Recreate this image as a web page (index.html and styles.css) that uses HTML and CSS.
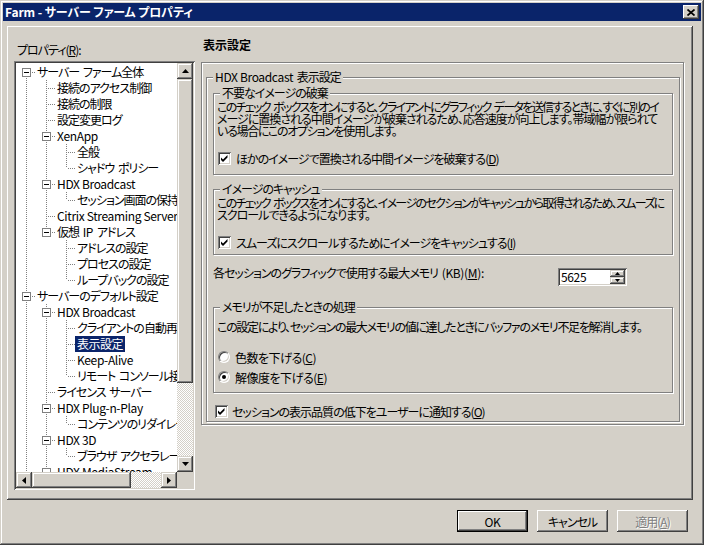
FILE: index.html
```html
<!DOCTYPE html>
<html lang="ja">
<head>
  <meta charset="UTF-8">
  <title>Farm - サーバー ファーム プロパティ</title>
  <link rel="stylesheet" href="styles.css">
</head>
<body>
<div class="window">
  <div class="titlebar">
    <span class="title">Farm - サーバー ファーム プロパティ</span>
    <span class="close-btn"><svg width="8" height="7" viewBox="0 0 8 7"><path d="M0.5 0.5l7 6M7.5 0.5l-7 6" stroke="#000" stroke-width="1.7"/></svg></span>
  </div>

  <div class="panel">
    <div class="left-col">
      <div class="label">プロパティ(<u>R</u>):</div>
      <div class="tree-box">
        <div class="tree-rows">
          <div class="row"><span class="g r"><span class="exp"></span></span><span class="txt">サーバー ファーム全体</span></div>
          <div class="row"><span class="g v"></span><span class="g t"></span><span class="txt">接続のアクセス制御</span></div>
          <div class="row"><span class="g v"></span><span class="g t"></span><span class="txt">接続の制限</span></div>
          <div class="row"><span class="g v"></span><span class="g t"></span><span class="txt">設定変更ログ</span></div>
          <div class="row"><span class="g v"></span><span class="g t"><span class="exp"></span></span><span class="txt en">XenApp</span></div>
          <div class="row"><span class="g v"></span><span class="g v"></span><span class="g t"></span><span class="txt">全般</span></div>
          <div class="row"><span class="g v"></span><span class="g v"></span><span class="g l"></span><span class="txt">シャドウ ポリシー</span></div>
          <div class="row"><span class="g v"></span><span class="g t"><span class="exp"></span></span><span class="txt en">HDX Broadcast</span></div>
          <div class="row"><span class="g v"></span><span class="g v"></span><span class="g l"></span><span class="txt">セッション画面の保持</span></div>
          <div class="row"><span class="g v"></span><span class="g t"></span><span class="txt en">Citrix Streaming Server</span></div>
          <div class="row"><span class="g v"></span><span class="g l"><span class="exp"></span></span><span class="txt">仮想 <span class="en">IP</span> アドレス</span></div>
          <div class="row"><span class="g v"></span><span class="g e"></span><span class="g t"></span><span class="txt">アドレスの設定</span></div>
          <div class="row"><span class="g v"></span><span class="g e"></span><span class="g t"></span><span class="txt">プロセスの設定</span></div>
          <div class="row"><span class="g v"></span><span class="g e"></span><span class="g l"></span><span class="txt">ループバックの設定</span></div>
          <div class="row"><span class="g t"><span class="exp"></span></span><span class="txt">サーバーのデフォルト設定</span></div>
          <div class="row"><span class="g v"></span><span class="g t"><span class="exp"></span></span><span class="txt en">HDX Broadcast</span></div>
          <div class="row"><span class="g v"></span><span class="g v"></span><span class="g t"></span><span class="txt">クライアントの自動再接続</span></div>
          <div class="row"><span class="g v"></span><span class="g v"></span><span class="g t"></span><span class="txt sel">表示設定</span></div>
          <div class="row"><span class="g v"></span><span class="g v"></span><span class="g t"></span><span class="txt en">Keep-Alive</span></div>
          <div class="row"><span class="g v"></span><span class="g v"></span><span class="g l"></span><span class="txt">リモート コンソール接続</span></div>
          <div class="row"><span class="g v"></span><span class="g t"></span><span class="txt">ライセンス サーバー</span></div>
          <div class="row"><span class="g v"></span><span class="g t"><span class="exp"></span></span><span class="txt en">HDX Plug-n-Play</span></div>
          <div class="row"><span class="g v"></span><span class="g v"></span><span class="g l"></span><span class="txt">コンテンツのリダイレクト</span></div>
          <div class="row"><span class="g v"></span><span class="g t"><span class="exp"></span></span><span class="txt en">HDX 3D</span></div>
          <div class="row"><span class="g v"></span><span class="g v"></span><span class="g l"></span><span class="txt">ブラウザ アクセラレーション</span></div>
          <div class="row"><span class="g v"></span><span class="g t"><span class="exp"></span></span><span class="txt en">HDX MediaStream</span></div>
        </div>
        <div class="vscroll">
          <span class="sb-btn"><svg width="7" height="4" viewBox="0 0 7 4"><polygon points="3.5,0 7,4 0,4" fill="#000"/></svg></span>
          <span class="thumb vthumb"></span>
          <span class="track"></span>
          <span class="sb-btn"><svg width="7" height="4" viewBox="0 0 7 4"><polygon points="0,0 7,0 3.5,4" fill="#000"/></svg></span>
        </div>
        <div class="hscroll">
          <span class="sb-btn"><svg width="4" height="7" viewBox="0 0 4 7"><polygon points="4,0 4,7 0,3.5" fill="#000"/></svg></span>
          <span class="thumb hthumb"></span>
          <span class="track"></span>
          <span class="sb-btn"><svg width="4" height="7" viewBox="0 0 4 7"><polygon points="0,0 4,3.5 0,7" fill="#000"/></svg></span>
        </div>
        <div class="corner"></div>
      </div>
    </div>

    <div class="right-col">
      <div class="heading">表示設定</div>
      <div class="frame">
        <fieldset class="group outer">
          <legend><span class="en">HDX Broadcast</span> 表示設定</legend>

          <fieldset class="group inner g1">
            <legend>不要なイメージの破棄</legend>
            <div class="desc">
              <span class="ln k1">このチェック ボックスをオンにすると、クライアントにグラフィック データを送信するときに、すぐに別のイ</span>
              <span class="ln k3">メージに置換される中間イメージが破棄されるため、応答速度が向上します。帯域幅が限られて</span>
              <span class="ln k2">いる場合にこのオプションを使用します。</span>
            </div>
            <div class="check-row"><span class="chk"><svg width="7" height="7" viewBox="0 0 7 7"><polygon points="0,2.5 2,4.5 6.5,0 6.5,2.5 2,7 0,5" fill="#000"/></svg></span><span>ほかのイメージで置換される中間イメージを破棄する(<u>D</u>)</span></div>
          </fieldset>

          <fieldset class="group inner g2">
            <legend>イメージのキャッシュ</legend>
            <div class="desc">
              <span class="ln k1">このチェック ボックスをオンにすると、イメージのセクションがキャッシュから取得されるため、スムーズに</span>
              <span class="ln k3">スクロールできるようになります。</span>
            </div>
            <div class="check-row"><span class="chk"><svg width="7" height="7" viewBox="0 0 7 7"><polygon points="0,2.5 2,4.5 6.5,0 6.5,2.5 2,7 0,5" fill="#000"/></svg></span><span>スムーズにスクロールするためにイメージをキャッシュする(<u>I</u>)</span></div>
          </fieldset>

          <div class="mem-row">
            <span class="mem-label">各セッションのグラフィックで使用する最大メモリ <span class="en">(KB)(<u>M</u>):</span></span>
            <span class="spin">
              <span class="spin-val en">5625</span>
              <span class="spin-btns">
                <span class="spin-btn"><svg width="5" height="3" viewBox="0 0 5 3"><polygon points="2.5,0 5,3 0,3" fill="#000"/></svg></span>
                <span class="spin-btn"><svg width="5" height="3" viewBox="0 0 5 3"><polygon points="0,0 5,0 2.5,3" fill="#000"/></svg></span>
              </span>
            </span>
          </div>

          <fieldset class="group inner g3">
            <legend>メモリが不足したときの処理</legend>
            <div class="desc">
              <span class="ln k2">この設定により、セッションの最大メモリの値に達したときにバッファのメモリ不足を解消します。</span>
            </div>
            <div class="radio-row first"><span class="radio"></span><span>色数を下げる(<u>C</u>)</span></div>
            <div class="radio-row"><span class="radio on"></span><span>解像度を下げる(<u>E</u>)</span></div>
          </fieldset>

          <div class="check-row last"><span class="chk"><svg width="7" height="7" viewBox="0 0 7 7"><polygon points="0,2.5 2,4.5 6.5,0 6.5,2.5 2,7 0,5" fill="#000"/></svg></span><span>セッションの表示品質の低下をユーザーに通知する(<u>O</u>)</span></div>
        </fieldset>
      </div>
    </div>
  </div>

  <div class="buttons">
    <span class="btn default en">OK</span>
    <span class="btn">キャンセル</span>
    <span class="btn disabled">適用(<u>A</u>)</span>
  </div>
</div>
</body>
</html>
```

FILE: styles.css
```css
* {
  box-sizing: border-box;
}
body {
  margin: 0;
  background: #d4d0c8;
  font-family: "Noto Sans CJK JP", sans-serif;
  font-size: 12px;
  color: #000;
  letter-spacing: -1px;
  word-spacing: 2px;
  font-feature-settings: "palt";
}
u {
  text-underline-offset: 1px;
}
.en {
  letter-spacing: -0.35px;
  word-spacing: 0;
}

/* window frame */
.window {
  width: 704px;
  height: 545px;
  padding: 3px;
  display: flex;
  flex-direction: column;
  background: #d4d0c8;
  box-shadow: inset -1px -1px #404040, inset 1px 1px #d4d0c8, inset -2px -2px #808080, inset 2px 2px #fff;
}
.titlebar {
  height: 18px;
  flex: none;
  display: flex;
  align-items: center;
  justify-content: space-between;
  padding: 0 2px 0 2px;
  background: #0a246a;
}
.title {
  color: #fff;
  font-weight: 700;
  line-height: 18px;
  letter-spacing: -0.1px;
  word-spacing: 0;
}
.close-btn {
  width: 16px;
  height: 14px;
  display: flex;
  align-items: center;
  justify-content: center;
  background: #d4d0c8;
  box-shadow: inset -1px -1px #404040, inset 1px 1px #fff, inset -2px -2px #808080;
}

/* main panel */
.panel {
  height: 474px;
  flex: none;
  margin: 5px 8px 0 4px;
  padding: 11px 9px 0 7px;
  display: flex;
  gap: 6px;
  box-shadow: inset -1px -1px #404040, inset 1px 1px #fff, inset -2px -2px #808080;
}
.left-col {
  width: 181px;
  flex: none;
}
.label {
  margin-top: 5px;
  height: 16px;
  line-height: 16px;
  padding-left: 3px;
}

/* tree */
.tree-box {
  margin-top: 3px;
  width: 181px;
  height: 429px;
  padding: 2px;
  background: #fff;
  display: grid;
  grid-template-columns: 161px 16px;
  grid-template-rows: 409px 16px;
  box-shadow: inset 1px 1px #808080, inset -1px -1px #fff, inset 2px 2px #404040, inset -2px -2px #d4d0c8;
}
.tree-rows {
  overflow: hidden;
  padding-top: 1px;
  background: #fff;
}
.row {
  display: flex;
  height: 16px;
  line-height: 16px;
  white-space: nowrap;
}
.g {
  position: relative;
  width: 20px;
  height: 16px;
  flex: none;
}
.g::before {
  content: "";
  position: absolute;
  left: 10px;
  top: 0;
  bottom: 0;
  width: 1px;
  background: repeating-linear-gradient(to bottom, #808080 0 1px, transparent 1px 2px);
}
.g::after {
  content: "";
  position: absolute;
  left: 11px;
  top: 8px;
  width: 8px;
  height: 1px;
  background: repeating-linear-gradient(to right, transparent 0 1px, #808080 1px 2px);
}
.g.v::after,
.g.e::before,
.g.e::after {
  display: none;
}
.g.l::before {
  bottom: 8px;
}
.g.r::before {
  top: 8px;
}
.exp {
  position: absolute;
  left: 6px;
  top: 4px;
  width: 9px;
  height: 9px;
  z-index: 1;
  border: 1px solid #808080;
  background: #fff;
}
.exp::after {
  content: "";
  position: absolute;
  left: 1px;
  top: 3px;
  width: 5px;
  height: 1px;
  background: #000;
}
.txt {
  padding: 0 2px 0 1px;
}
.txt.sel {
  background: #0a246a;
  color: #fff;
  margin-left: -1px;
  padding: 0 2px 0 2px;
  letter-spacing: -0.5px;
}

/* scrollbars */
.vscroll {
  display: flex;
  flex-direction: column;
}
.hscroll {
  display: flex;
}
.sb-btn,
.thumb {
  flex: none;
  display: flex;
  align-items: center;
  justify-content: center;
  background: #d4d0c8;
  box-shadow: inset -1px -1px #404040, inset 1px 1px #d4d0c8, inset -2px -2px #808080, inset 2px 2px #fff;
}
.sb-btn {
  width: 16px;
  height: 16px;
}
.vthumb {
  height: 304px;
}
.hthumb {
  width: 99px;
}
.track {
  flex: 1;
  background: repeating-conic-gradient(#fff 0 25%, #d4d0c8 0 50%) 0 0 / 2px 2px;
}
.corner {
  background: #d4d0c8;
}

/* right side */
.right-col {
  width: 483px;
  flex: none;
}
.heading {
  height: 16px;
  line-height: 16px;
  padding-left: 2px;
  font-weight: 700;
  letter-spacing: 0;
}
.frame {
  margin-top: 9px;
  height: 363px;
  padding: 7px 3px 0 4px;
  border: 1px solid #808080;
  box-shadow: inset 1px 1px #fff, 1px 1px #fff;
}
.group {
  margin: 0;
  min-width: 0;
  border: 1px solid #808080;
  box-shadow: inset 1px 1px #fff, 1px 1px #fff;
}
.group legend {
  padding: 0 2px;
  line-height: 14px;
  background: #d4d0c8;
}
.group.outer {
  padding: 0 6px 2px 6px;
}
.group.inner {
  padding: 0 3px;
}
.group.inner legend {
  margin-left: 3px;
}
.g1 {
  margin-top: 2px;
  padding-bottom: 8px !important;
}
.g2 {
  margin-top: 7px;
  padding-bottom: 4px !important;
}
.g3 {
  margin-top: 14px;
  padding-bottom: 7px !important;
}
.desc {
  margin-top: 1px;
  line-height: 12px;
  white-space: nowrap;
}
.g3 .desc {
  margin-top: 7px;
}
.ln {
  display: block;
}
.ln.k1 {
  letter-spacing: -1.65px;
}
.ln.k2 {
  letter-spacing: -1.3px;
}
.ln.k3 {
  letter-spacing: -1px;
}
.check-row,
.radio-row {
  display: flex;
  align-items: center;
  height: 16px;
  gap: 5px;
  white-space: nowrap;
}
.inner .check-row {
  margin-top: 13px;
  padding-left: 1px;
}
.check-row.last {
  margin-top: 10px;
  padding-left: 2px;
  gap: 4px;
}
.chk {
  width: 13px;
  height: 13px;
  flex: none;
  display: flex;
  align-items: center;
  justify-content: center;
  background: #fff;
  box-shadow: inset 1px 1px #808080, inset -1px -1px #fff, inset 2px 2px #404040, inset -2px -2px #d4d0c8;
}
.radio-row {
  padding-left: 1px;
  margin-top: 4px;
  letter-spacing: -0.5px;
}
.radio-row.first {
  margin-top: 16px;
}
.radio {
  position: relative;
  width: 12px;
  height: 12px;
  flex: none;
  border-radius: 50%;
  background: #fff;
  border: 1px solid;
  border-color: #808080 #fff #fff #808080;
  box-shadow: inset 1px 1px #404040, inset -1px -1px #d4d0c8;
}
.radio.on::after {
  content: "";
  position: absolute;
  left: 3px;
  top: 3px;
  width: 4px;
  height: 4px;
  border-radius: 50%;
  background: #000;
}
.mem-row {
  display: flex;
  align-items: flex-start;
  margin-top: 12px;
}
.mem-label {
  width: 345px;
  line-height: 12px;
  white-space: nowrap;
}
.spin {
  margin-top: 1px;
  width: 69px;
  height: 18px;
  padding: 2px;
  display: flex;
  background: #fff;
  box-shadow: inset 1px 1px #808080, inset -1px -1px #fff, inset 2px 2px #404040, inset -2px -2px #d4d0c8;
}
.spin-val {
  flex: 1;
  padding-left: 1px;
  line-height: 14px;
}
.spin-btns {
  width: 15px;
  display: flex;
  flex-direction: column;
}
.spin-btn {
  flex: 1;
  display: flex;
  align-items: center;
  justify-content: center;
  background: #d4d0c8;
  box-shadow: inset -1px -1px #404040, inset 1px 1px #d4d0c8, inset -2px -2px #808080, inset 2px 2px #fff;
}

/* dialog buttons */
.buttons {
  display: flex;
  justify-content: flex-end;
  gap: 9px;
  margin: 10px 13px 0 0;
}
.btn {
  width: 71px;
  height: 22px;
  display: flex;
  align-items: center;
  justify-content: center;
  background: #d4d0c8;
  box-shadow: inset -1px -1px #404040, inset 1px 1px #fff, inset -2px -2px #808080;
}
.btn.default {
  box-shadow: inset 0 0 0 1px #000, inset -2px -2px #404040, inset 2px 2px #fff, inset -3px -3px #808080;
}
.btn.disabled {
  color: #808080;
  text-shadow: 1px 1px #fff;
}
```
